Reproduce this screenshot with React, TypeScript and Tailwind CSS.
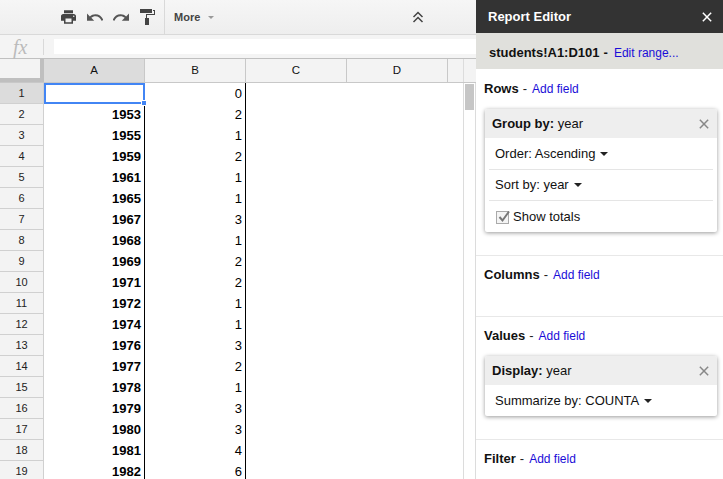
const rows: [string, string][] = [
  ["", "0"], ["1953", "2"], ["1955", "1"], ["1959", "2"], ["1961", "1"], ["1965", "1"], ["1967", "3"],
  ["1968", "1"], ["1969", "2"], ["1971", "2"], ["1972", "1"], ["1974", "1"], ["1976", "3"], ["1977", "2"],
  ["1978", "1"], ["1979", "3"], ["1980", "3"], ["1981", "4"], ["1982", "6"],
];

function Caret() {
  return <span className="ml-[5px] inline-block h-0 w-0 border-x-[4px] border-t-[4px] border-x-transparent border-t-[#222] align-middle" />;
}

function CloseIcon({ className }: { className: string }) {
  return (
    <svg viewBox="0 0 12 12" className={className} fill="none" stroke="currentColor" strokeWidth="1.8">
      <path d="M1 1l10 10M11 1L1 11" />
    </svg>
  );
}

function SectionTitle({ label }: { label: string }) {
  return (
    <div className="flex items-center text-[13px] leading-[16px]">
      <span className="font-bold text-[#111]">{label}</span>
      <span className="ml-1 text-[#222]">-</span>
      <span className="ml-[5px] text-[12px] text-[#1a0dd8]">Add field</span>
    </div>
  );
}

function CardHead({ label, value }: { label: string; value: string }) {
  return (
    <div className="flex h-[29px] items-center justify-between bg-[#eeeeee] pl-[7px] pr-[8px] text-[13px] text-[#111]">
      <span><b>{label}</b> {value}</span>
      <CloseIcon className="h-[10px] w-[10px] text-[#888]" />
    </div>
  );
}

function Toolbar() {
  return (
    <div className="flex h-[35px] items-center border-b border-[#d9d9d9] bg-gradient-to-b from-[#f6f6f6] to-[#eeeeee]">
      <div className="ml-[61px] flex items-center">
        <svg viewBox="2 3 20 18" className="h-[14px] w-[15px] text-[#444]" fill="currentColor">
          <path d="M19 8H5c-1.66 0-3 1.34-3 3v6h4v4h12v-4h4v-6c0-1.66-1.34-3-3-3zm-3 11H8v-5h8v5zm3-7c-.55 0-1-.45-1-1s.45-1 1-1 1 .45 1 1-.45 1-1 1zm-1-9H6v4h12V3z" />
        </svg>
        <svg viewBox="2 7 20 10" className="ml-[11px] h-[9px] w-[16px] text-[#555]" fill="currentColor">
          <path d="M12.5 8c-2.65 0-5.05.99-6.9 2.6L2 7v9h9l-3.62-3.62c1.39-1.16 3.16-1.88 5.12-1.88 3.54 0 6.55 2.31 7.6 5.5l2.37-.78C21.08 11.03 17.15 8 12.5 8z" />
        </svg>
        <svg viewBox="2 7 20 10" className="ml-[10px] h-[9px] w-[16px] text-[#555]" fill="currentColor">
          <path d="M18.4 10.6C16.55 8.99 14.15 8 11.5 8c-4.65 0-8.58 3.03-9.96 7.22L3.9 16c1.05-3.19 4.05-5.5 7.6-5.5 1.95 0 3.73.72 5.12 1.88L13 16h9V7l-3.6 3.6z" />
        </svg>
        <svg viewBox="0 0 15 17" className="ml-[11px] -mt-[1px] h-[17px] w-[15px] text-[#444]" fill="currentColor">
          <path d="M0 1h12v4H0zM13 2h2v5H7v3h2v7H5v-7h1V6h8V3h-1z" />
        </svg>
      </div>
      <div className="ml-[9px] h-full w-px bg-[#d9d9d9]" />
      <span className="ml-[9px] text-[11px] font-bold text-[#444]">More</span>
      <span className="ml-[8px] h-0 w-0 border-x-[3px] border-t-[3px] border-x-transparent border-t-[#999]" />
      <svg viewBox="0 0 12 12" className="ml-[198px] h-[12px] w-[12px] text-[#444]" fill="none" stroke="currentColor" strokeWidth="1.5">
        <path d="M1.5 6L6 1.5 10.5 6M1.5 11L6 6.5 10.5 11" />
      </svg>
    </div>
  );
}

function FormulaBar() {
  return (
    <div className="flex h-[24px] items-center border-b border-[#c0c0c0] bg-[#f4f4f4]">
      <span className="ml-[13px] w-[30px] font-['Liberation_Serif',serif] text-[20px] italic leading-none text-[#bbb]">fx</span>
      <div className="h-[16px] w-px bg-[#d9d9d9]" />
      <div className="ml-[10px] h-[15px] flex-1 bg-white" />
    </div>
  );
}

function ColumnHeaders() {
  return (
    <div className="flex h-[24px] border-b border-[#c8c8c8] bg-[#f3f3f3] text-[11.5px] text-[#111]">
      <div className="h-full w-[44px] border-r-[4px] border-b-[4px] border-[#bfbfbf]" />
      <div className="flex w-[101px] items-center justify-center border-r border-[#c8c8c8] bg-[#dcdcdc]">A</div>
      <div className="flex w-[101px] items-center justify-center border-r border-[#c8c8c8]">B</div>
      <div className="flex w-[101px] items-center justify-center border-r border-[#c8c8c8]">C</div>
      <div className="flex w-[101px] items-center justify-center border-r border-[#c8c8c8]">D</div>
      <div className="w-[16px] border-r border-[#dcdcdc]" />
      <div className="flex-1" />
    </div>
  );
}

function Sheet() {
  return (
    <div className="relative flex min-h-0 flex-1 overflow-hidden">
      <div className="w-[463px] shrink-0">
        {rows.map(([year, count], i) => (
          <div key={i} className="flex h-[21px]">
            <div className={`flex w-[44px] items-center justify-center border-r border-b border-[#d0d0d0] text-[11px] text-[#222] ${i === 0 ? "bg-[#dcdcdc]" : "bg-[#f3f3f3]"}`}>
              {i + 1}
            </div>
            <div className="flex w-[101px] items-center justify-end border-r-[1.5px] border-black pr-[3px] text-[13px] font-bold text-black">{year}</div>
            <div className="flex w-[101px] items-center justify-end border-r-[1.5px] border-black pr-[3px] text-[13px] text-black">{count}</div>
          </div>
        ))}
      </div>
      <div className="flex-1 border-x border-[#dcdcdc] px-[1px] pt-[1px]">
        <div className="h-[26px] w-full bg-[#c6c6c6]" />
      </div>
      {/* selected cell */}
      <div className="absolute top-0 left-[44px] h-[21px] w-[101px] border-2 border-[#4285f4]" />
      <div className="absolute top-[17px] left-[141px] h-[6px] w-[6px] border border-white bg-[#4285f4]" />
    </div>
  );
}

function ReportEditor() {
  return (
    <div className="flex w-[247px] shrink-0 flex-col bg-white">
      <div className="flex h-[33px] items-center justify-between bg-[#333333] pl-[12px] pr-[11px] text-[13px] font-bold text-white">
        <span>Report Editor</span>
        <CloseIcon className="h-[10px] w-[10px] text-white" />
      </div>
      <div className="flex h-[36px] items-center bg-[#e0e0dc] pt-[4px] pl-[13px] text-[13px] text-[#111]">
        <b>students!A1:D101</b>
        <span className="ml-1 font-bold">-</span>
        <span className="ml-[6px] text-[12px] text-[#1a0dd8]">Edit range...</span>
      </div>

      <div className="h-[187px] border-b border-[#e8e8e8] pt-[12px] pl-[8px] pr-[6px]">
        <SectionTitle label="Rows" />
        <div className="mt-[12px] ml-[1px] overflow-hidden rounded-[2px] bg-white text-[13px] text-[#111] shadow-[0_1px_4px_rgba(0,0,0,0.4)]">
          <CardHead label="Group by:" value="year" />
          <div className="mx-[4px] border-b border-[#e5e5e5] pl-[6px]">
            <div className="flex h-[31px] items-center pt-[1px]">Order: Ascending<Caret /></div>
          </div>
          <div className="mx-[4px] border-b border-[#e5e5e5] pl-[6px]">
            <div className="flex h-[30px] items-center">Sort by: year<Caret /></div>
          </div>
          <div className="flex h-[31px] items-center pt-[1px] pl-[11px]">
            <span className="relative h-[13px] w-[13px] border border-[#aaa] bg-[#f4f4f4]">
              <svg viewBox="0 0 14 14" className="absolute -top-[2px] left-0 h-[14px] w-[14px] text-[#777]" fill="none" stroke="currentColor" strokeWidth="2">
                <path d="M2.5 7l3 3.5L12 1.5" />
              </svg>
            </span>
            <span className="ml-[4px]">Show totals</span>
          </div>
        </div>
      </div>

      <div className="h-[61px] border-b border-[#e8e8e8] pt-[11px] pl-[8px]">
        <SectionTitle label="Columns" />
      </div>

      <div className="h-[123px] border-b border-[#e8e8e8] pt-[11px] pl-[8px] pr-[6px]">
        <SectionTitle label="Values" />
        <div className="mt-[12px] ml-[1px] overflow-hidden rounded-[2px] bg-white text-[13px] text-[#111] shadow-[0_1px_4px_rgba(0,0,0,0.4)]">
          <CardHead label="Display:" value="year" />
          <div className="flex h-[31px] items-center pl-[10px]">Summarize by: COUNTA<Caret /></div>
        </div>
      </div>

      <div className="pt-[11px] pl-[8px]">
        <SectionTitle label="Filter" />
      </div>
    </div>
  );
}

export default function App() {
  return (
    <div className="flex h-[479px] w-[723px] overflow-hidden bg-white font-['Liberation_Sans',Arial,sans-serif]">
      <div className="flex w-[476px] shrink-0 flex-col">
        <Toolbar />
        <FormulaBar />
        <ColumnHeaders />
        <Sheet />
      </div>
      <ReportEditor />
    </div>
  );
}
